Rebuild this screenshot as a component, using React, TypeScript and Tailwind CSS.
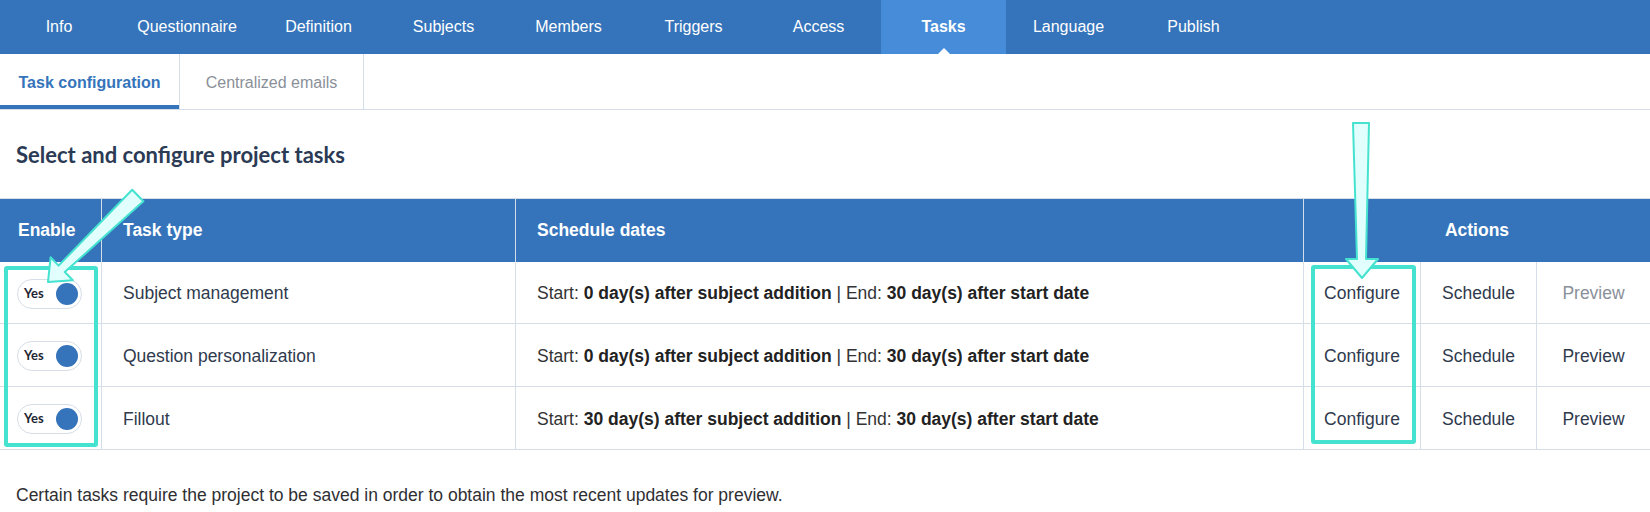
import React from 'react';

const navItems = [
  { label: 'Info', width: 'w-[118px]' },
  { label: 'Questionnaire', width: 'w-[138px]' },
  { label: 'Definition', width: 'w-[125px]' },
  { label: 'Subjects', width: 'w-[125px]' },
  { label: 'Members', width: 'w-[125px]' },
  { label: 'Triggers', width: 'w-[125px]' },
  { label: 'Access', width: 'w-[125px]' },
  { label: 'Tasks', width: 'w-[125px]', active: true },
  { label: 'Language', width: 'w-[125px]' },
  { label: 'Publish', width: 'w-[125px]' },
];

const tasks = [
  { name: 'Subject management', start: '0', end: '30', height: 'h-[62px]', previewDisabled: true },
  { name: 'Question personalization', start: '0', end: '30', height: 'h-[63px]', previewDisabled: false },
  { name: 'Fillout', start: '30', end: '30', height: 'h-[63px]', previewDisabled: false },
];

function Toggle(): React.ReactElement {
  return (
    <div className="flex h-[30px] w-[65px] items-center justify-between rounded-full border border-[#d5dde6] bg-white pl-[6px] pr-[3px]">
      <span className="font-['Lato',sans-serif] text-[13px] font-bold text-[#1f2733]">Yes</span>
      <span className="h-[22px] w-[22px] rounded-full bg-[#3574ba]" />
    </div>
  );
}

function TopNav(): React.ReactElement {
  return (
    <nav className="flex h-[54px] bg-[#3574ba]">
      {navItems.map((item) => (
        <div
          key={item.label}
          className={
            item.active
              ? 'relative flex h-full w-[125px] items-center justify-center bg-[#468cd9] text-[16px] font-bold text-white'
              : `flex h-full ${item.width} items-center justify-center text-[16px] text-white`
          }
        >
          {item.label}
          {item.active && (
            <span className="absolute bottom-0 left-1/2 h-0 w-0 -translate-x-1/2 border-x-[6px] border-b-[6px] border-x-transparent border-b-white" />
          )}
        </div>
      ))}
    </nav>
  );
}

function SubTabs(): React.ReactElement {
  return (
    <div className="flex h-[56px] border-b border-[#d5dde6]">
      <div className="relative flex w-[180px] items-center justify-center border-r border-[#d5dde6] pt-[3px] text-[16px] font-bold text-[#3574ba]">
        Task configuration
        <span className="absolute bottom-0 left-0 h-[4px] w-full bg-[#3574ba]" />
      </div>
      <div className="flex w-[184px] items-center justify-center border-r border-[#d5dde6] pt-[3px] text-[16px] text-[#8a9099]">
        Centralized emails
      </div>
    </div>
  );
}

function TaskTable(): React.ReactElement {
  const head = 'flex h-[63px] items-center bg-[#3574ba] text-[17.5px] font-bold text-white';
  const cell = 'flex items-center border-b border-r border-[#d5dde6] pt-[2px] text-[17.5px] text-[#2f3a4d]';
  return (
    <div className="grid grid-cols-[102px_414px_788px_117px_116px_1fr] border-t border-[#d5dde6]">
      <div className={`${head} border-r border-[#d5dde6] pl-[18px]`}>Enable</div>
      <div className={`${head} border-r border-[#d5dde6] pl-[21px]`}>Task type</div>
      <div className={`${head} border-r border-[#d5dde6] pl-[21px]`}>Schedule dates</div>
      <div className={`${head} col-span-3 justify-center`}>Actions</div>

      {tasks.map((task) => (
        <React.Fragment key={task.name}>
          <div className={`${cell} ${task.height} pl-[17px]`}>
            <Toggle />
          </div>
          <div className={`${cell} ${task.height} pl-[21px]`}>{task.name}</div>
          <div className={`${cell} ${task.height} pl-[21px] text-[#333]`}>
            <span>
              Start: <b className="text-[#222]">{task.start} day(s) after subject addition</b> | End:{' '}
              <b className="text-[#222]">{task.end} day(s) after start date</b>
            </span>
          </div>
          <div className={`${cell} ${task.height} justify-center`}>Configure</div>
          <div className={`${cell} ${task.height} justify-center`}>Schedule</div>
          <div
            className={`${cell} ${task.height} justify-center border-r-0 ${
              task.previewDisabled ? 'text-[#8a9099]' : ''
            }`}
          >
            Preview
          </div>
        </React.Fragment>
      ))}
    </div>
  );
}

export default function App(): React.ReactElement {
  return (
    <div className="relative h-[512px] w-[1650px] overflow-hidden bg-white font-['Liberation_Sans',Arial,sans-serif]">
      <TopNav />
      <SubTabs />
      <div className="flex h-[88px] items-center pl-4">
        <h2 className="font-['Lato',sans-serif] text-[22px] font-bold text-[#2b3a55]">
          Select and configure project tasks
        </h2>
      </div>
      <TaskTable />
      <p className="mt-[32px] pl-4 text-[17.5px] text-[#2f2f33]">
        Certain tasks require the project to be saved in order to obtain the most recent updates for preview.
      </p>

      {/* highlight annotations */}
      <div className="absolute left-[4px] top-[266px] h-[181px] w-[94px] rounded-[3px] border-4 border-[#45e2d0]" />
      <div className="absolute left-[1311px] top-[265px] h-[179px] w-[105px] rounded-[3px] border-4 border-[#45e2d0]" />
      <svg className="pointer-events-none absolute left-0 top-0" width="1650" height="512" viewBox="0 0 1650 512">
        <polygon
          points="1353,123 1369,123 1366,259 1378,259 1362,278 1346,259 1357,259"
          fill="#e0fffd"
          stroke="#45e2d0"
          strokeWidth="2"
          strokeLinejoin="round"
        />
        <polygon
          points="132.2,189.7 143.4,201.3 64.8,272 72.8,280.3 48,282 50.6,257.3 58.6,265.6"
          fill="#e0fffd"
          stroke="#45e2d0"
          strokeWidth="2"
          strokeLinejoin="round"
        />
      </svg>
    </div>
  );
}
